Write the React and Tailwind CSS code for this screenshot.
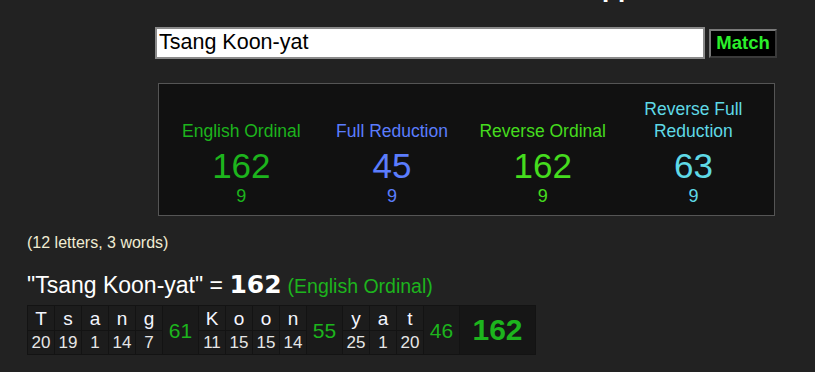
export default function App() {
  const font = { fontFamily: '"Liberation Sans", Arial, sans-serif' };
  const groups = [
    { letters: [["T", 20], ["s", 19], ["a", 1], ["n", 14], ["g", 7]], sum: 61 },
    { letters: [["K", 11], ["o", 15], ["o", 15], ["n", 14]], sum: 55 },
    { letters: [["y", 25], ["a", 1], ["t", 20]], sum: 46 },
  ];
  const cols = [
    { label: ["English Ordinal"], value: 162, small: 9, color: "text-[#1db41d]" },
    { label: ["Full Reduction"], value: 45, small: 9, color: "text-[#5b7dfd]" },
    { label: ["Reverse Ordinal"], value: 162, small: 9, color: "text-[#45dc1e]" },
    { label: ["Reverse Full", "Reduction"], value: 63, small: 9, color: "text-[#5fd9e6]" },
  ];
  return (
    <div className="min-h-[372px] w-[815px] bg-[#222222] font-['Liberation_Sans',Arial,sans-serif]" style={font}>
      <div className="h-[2px] overflow-hidden flex justify-start pl-[602px]">
        <span className="text-[26px] font-bold leading-[30px] text-white mt-[-27px]">pp</span>
      </div>
      <div className="flex items-center pl-[155px] pt-[25px]">
        <div className="w-[550px] h-[32px] bg-white border-2 border-[#8a8a8a] flex items-center pl-[2px]">
          <span className="text-[21.5px] text-black leading-none">Tsang Koon-yat</span>
        </div>
        <div className="ml-[4px] w-[68px] h-[29px] bg-black border-2 border-t-[#7a7a7a] border-l-[#7a7a7a] border-r-[#3a3a3a] border-b-[#3a3a3a] flex items-center justify-center">
          <span className="text-[18.5px] font-bold text-[#2bf02b] leading-none">Match</span>
        </div>
      </div>
      <div className="ml-[158px] mt-[24px] w-[617px] h-[133px] bg-[#111111] border border-[#555555] flex pl-[7px] pt-[14px]">
        {cols.map((c, i) => (
          <div key={i} className={`w-[150.7px] flex flex-col items-center ${c.color}`}>
            <div className="h-[44px] flex flex-col justify-end items-center text-[17.5px] leading-[22px]">
              {c.label.map((l, j) => (
                <div key={j}>{l}</div>
              ))}
            </div>
            <div className="text-[35px] leading-[38px] mt-[5px]">{c.value}</div>
            <div className="text-[18px] leading-[20px] mt-[1px]">{c.small}</div>
          </div>
        ))}
      </div>
      <div className="pl-[27px] mt-[17px] text-[16px] leading-[20px] text-[#f0ecd2]">(12 letters, 3 words)</div>
      <div className="pl-[27px] mt-[18px] flex items-baseline leading-[28px]">
        <span className="text-[23px] text-white whitespace-pre">"Tsang Koon-yat" = </span>
        <span className="text-[25px] font-bold text-white" style={{ fontFamily: '"DejaVu Sans", sans-serif' }}>162</span>
        <span className="text-[19.5px] text-[#1db41d] ml-[6px]">(English Ordinal)</span>
      </div>
      <div className="ml-[27px] mt-[5px] inline-flex bg-[#131313] p-[1px] gap-[1px]">
        {groups.map((g, gi) => (
          <div key={gi} className="flex gap-[1px]">
            {g.letters.map(([l, n], li) => (
              <div key={li} className="flex flex-col gap-[1px] w-[26px]">
                <div className="h-[24px] bg-[#1c1c1c] flex items-center justify-center text-[19px] text-[#f4f6ff] leading-none">{l}</div>
                <div className="h-[23px] bg-[#1c1c1c] flex items-center justify-center text-[17px] text-[#e6e6e6] leading-none">{n}</div>
              </div>
            ))}
            <div className="w-[35px] bg-[#1a1a1a] flex items-center justify-center text-[21px] text-[#1db41d] leading-none">{g.sum}</div>
          </div>
        ))}
        <div className="w-[75px] bg-[#161616] flex items-center justify-center text-[30px] font-bold text-[#1db41d] leading-none">162</div>
      </div>
    </div>
  );
}
